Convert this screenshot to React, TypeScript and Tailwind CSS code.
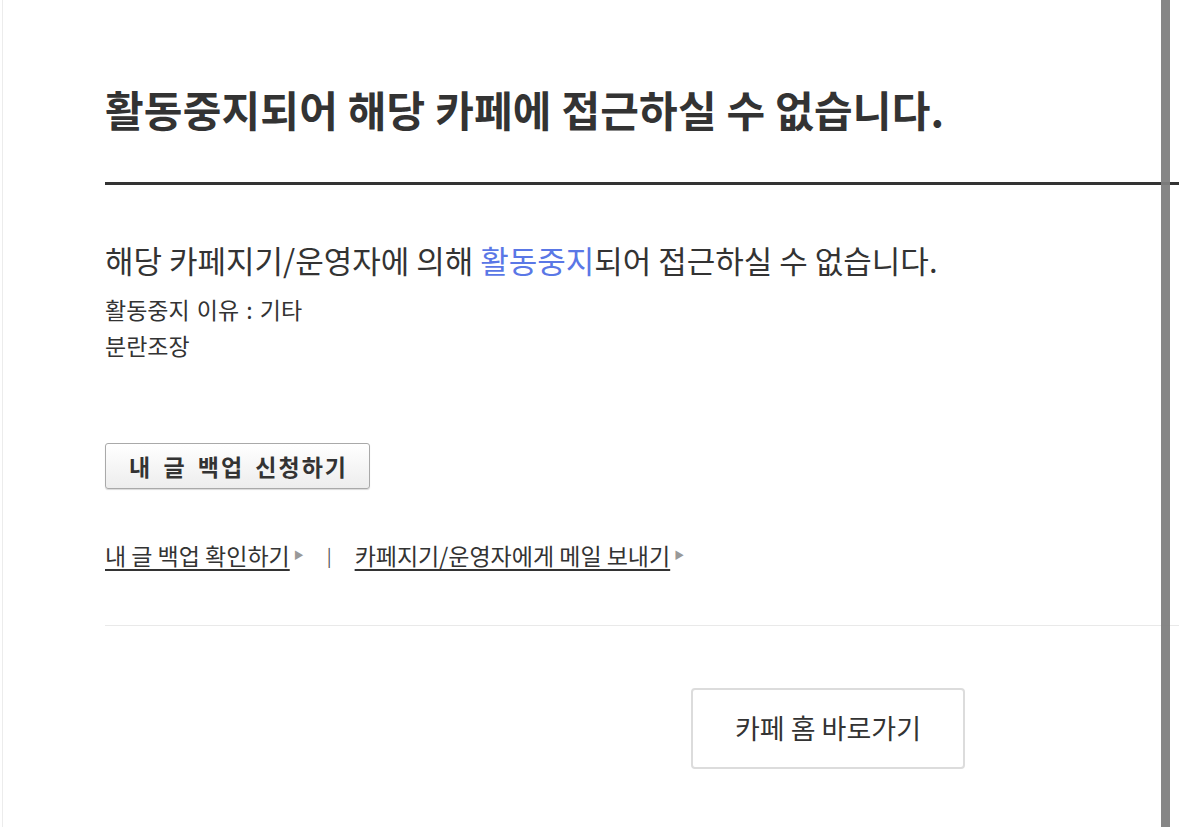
export default function App() {
  const font = { fontFamily: '"Noto Sans CJK KR", "Noto Sans", sans-serif' };

  return (
    <div
      className="relative h-[827px] w-[1179px] overflow-hidden bg-white text-[#333]"
      style={font}
    >
      <div className="ml-[2px] h-full border-l border-[#ececec] pl-[102px]">
        <h1 className="pt-[84px] text-[42px] font-bold leading-[50px] tracking-[0.2px] text-[#333]">
          활동중지되어 해당 카페에 접근하실 수 없습니다.
        </h1>
        <div className="mt-[48px] h-[3px] bg-[#333]" />

        <p className="mt-[56px] text-[31px] leading-[38px] text-[#333]">
          해당 카페지기/운영자에 의해{" "}
          <span className="text-[#5a77e6]">활동중지</span>되어 접근하실 수
          없습니다.
        </p>
        <div className="mt-[12px] text-[23px] leading-[36px] text-[#333]">
          <p className="[word-spacing:2px]">활동중지 이유 : 기타</p>
          <p>분란조장</p>
        </div>

        <button className="mt-[80px] flex h-[46px] w-[265px] items-center justify-center rounded-[3px] border border-[#a9a9a9] bg-gradient-to-b from-white to-[#ededed] pl-[2px] text-[23px] font-bold tracking-[2px] text-[#333] shadow-[0_1px_1px_rgba(0,0,0,0.15)] [word-spacing:4px]">
          내 글 백업 신청하기
        </button>

        <div className="mt-[51px] flex items-center text-[23px] leading-[30px] text-[#333]">
          <a className="underline underline-offset-[4px]">내 글 백업 확인하기</a>
          <span className="ml-[4px] text-[10px] text-[#999]">▶</span>
          <span className="mx-[23px] text-[18px] text-[#555]">|</span>
          <a className="underline underline-offset-[4px]">
            카페지기/운영자에게 메일 보내기
          </a>
          <span className="ml-[4px] text-[10px] text-[#999]">▶</span>
        </div>

        <div className="mt-[55px] h-[1px] bg-[#e9e9e9]" />

        <button className="ml-[586px] mt-[62px] flex h-[81px] w-[274px] items-center justify-center rounded-[4px] border-2 border-[#dcdcdc] bg-white text-[27px] text-[#333]">
          카페 홈 바로가기
        </button>
      </div>

      <div className="absolute right-[9px] top-0 h-full w-[9px] bg-[#808080]/95" />
    </div>
  );
}
